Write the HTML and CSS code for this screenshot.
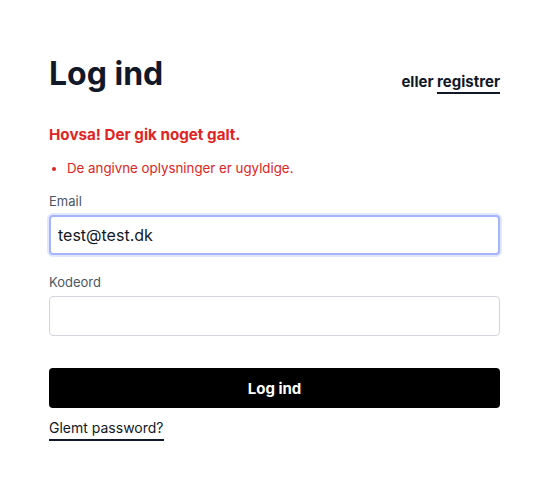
FILE: index.html
```html
<!DOCTYPE html>
<html lang="da">
<head>
<meta charset="utf-8">
<link rel="stylesheet" href="styles.css">
</head>
<body>
<main class="card">
  <header class="head">
    <h1 class="title">Log ind</h1>
    <div class="alt">eller <a class="link" href="#">registrer</a></div>
  </header>
  <section class="errors">
    <div class="err-title">Hovsa! Der gik noget galt.</div>
    <ul class="err-list">
      <li>De angivne oplysninger er ugyldige.</li>
    </ul>
  </section>
  <form class="form">
    <label class="field">
      <span class="label">Email</span>
      <input class="input focus" type="text" value="test@test.dk">
    </label>
    <label class="field">
      <span class="label">Kodeord</span>
      <input class="input" type="password" value="">
    </label>
    <button class="btn" type="button">Log ind</button>
  </form>
  <a class="link forgot" href="#">Glemt password?</a>
</main>
</body>
</html>
```
FILE: styles.css
```css
* { box-sizing: border-box; }
html, body { margin: 0; padding: 0; background: #fff; }
body { font-family: Inter, "Noto Sans", sans-serif; color: #111827; }
.card { width: 451px; margin: 0 0 0 49px; padding-top: 54px; display: flex; flex-direction: column; }
.head { display: flex; justify-content: space-between; align-items: flex-end; }
.title { margin: 0; font-size: 32px; font-weight: 700; line-height: 40px; color: #111827; }
.alt { font-size: 15px; font-weight: 700; color: #111827; line-height: 20px; padding-bottom: 2px; }
.link { color: #111827; text-decoration: none; border-bottom: 2px solid #111827; padding-bottom: 1px; }
.errors { margin-top: 31px; color: #e02424; }
.err-title { font-size: 15.2px; font-weight: 700; line-height: 20px; }
.err-list { margin: 13px 0 0; padding-left: 18px; font-size: 13.3px; line-height: 20px; list-style: disc; }
.form { margin-top: 13px; display: flex; flex-direction: column; }
.field { display: flex; flex-direction: column; margin-bottom: 17px; }
.label { font-size: 13px; color: #4b5563; line-height: 20px; margin-bottom: 4px; }
.input { height: 40px; width: 100%; border: 1px solid #d1d5db; border-radius: 4px; padding: 0 8px; font-family: Inter, sans-serif; font-size: 16px; color: #111827; background: #fff; outline: none; }
.input.focus { border: 2px solid #a5b4fc; box-shadow: 0 0 0 2px #e0e7ff; padding: 0 7px; }
.btn { margin-top: 15px; height: 40px; background: #000; color: #fff; border: 0; border-radius: 4px; font-family: Inter, sans-serif; font-size: 15px; font-weight: 700; }
.forgot { margin-top: 10px; align-self: flex-start; font-size: 14px; font-weight: 400; line-height: 20px; }
```
